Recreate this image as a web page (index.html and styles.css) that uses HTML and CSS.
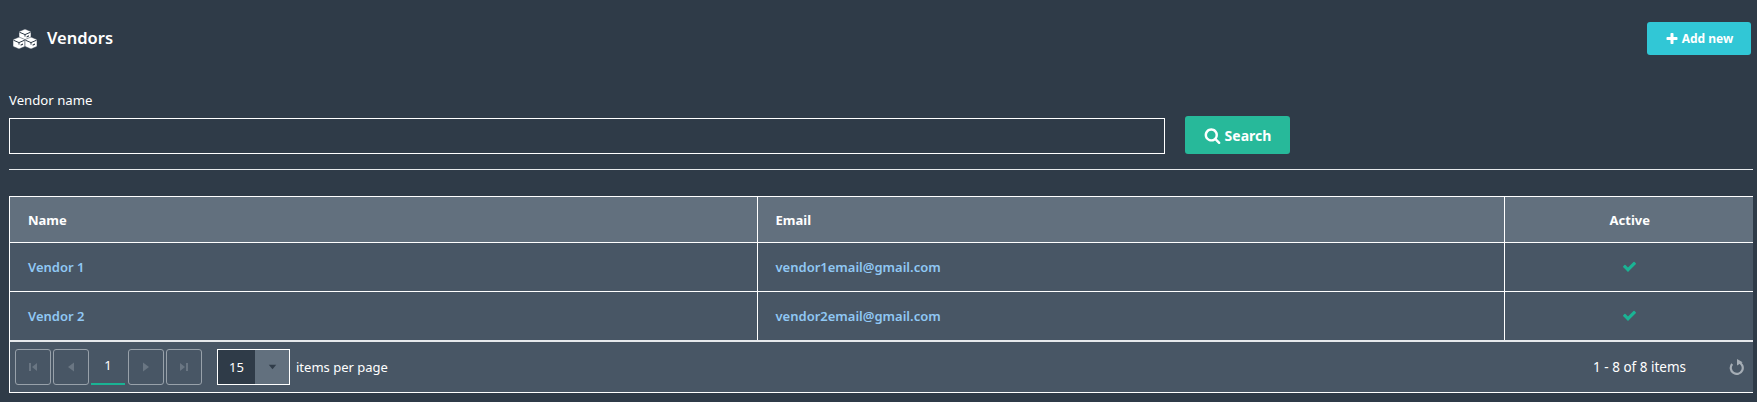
FILE: index.html
```html
<!DOCTYPE html>
<html lang="en">
<head>
<meta charset="utf-8">
<title>Vendors</title>
<link rel="stylesheet" href="styles.css">
</head>
<body>
<header class="topbar">
  <h1 class="title">
    <svg class="title-icon" viewBox="0 0 24 20" aria-hidden="true">
      <g class="cube"><polygon points="12,0 18,2.6 18,9 12,11.6 6,9 6,2.6"/><path d="M6.4 3.2 12 5.6 17.6 3.2M12 5.6V7.6"/><path class="shade" d="M13.6 7.2 16 6.2V7.6L13.6 8.6z"/></g>
      <g class="cube"><polygon points="6,8 12,10.6 12,17.4 6,20 0,17.4 0,10.6"/><path d="M.4 11.2 6 13.6 11.6 11.2M6 13.6V15.6"/><path class="shade" d="M7.6 15.4 10 14.4V15.8L7.6 16.8z"/></g>
      <g class="cube"><polygon points="18,8 24,10.6 24,17.4 18,20 12,17.4 12,10.6"/><path d="M12.4 11.2 18 13.6 23.6 11.2M18 13.6V15.6"/><path class="shade" d="M19.6 15.4 22 14.4V15.8L19.6 16.8z"/></g>
    </svg>
    <span class="title-text">Vendors</span>
  </h1>
  <button class="btn btn-add" type="button">
    <svg class="btn-icon-sm" viewBox="0 0 1792 1792" aria-hidden="true"><path d="M1600 736v192q0 40-28 68t-68 28h-416v416q0 40-28 68t-68 28h-192q-40 0-68-28t-28-68v-416h-416q-40 0-68-28t-28-68v-192q0-40 28-68t68-28h416v-416q0-40 28-68t68-28h192q40 0 68 28t28 68v416h416q40 0 68 28t28 68z"/></svg>
    Add new
  </button>
</header>

<form class="filter">
  <div class="field">
    <label class="field-label" for="vendor-name">Vendor name</label>
    <input class="field-input" id="vendor-name" type="text">
  </div>
  <button class="btn btn-search" type="button">
    <svg class="btn-icon" viewBox="0 0 1792 1792" aria-hidden="true"><path d="M1216 832q0-185-131.5-316.5t-316.5-131.5-316.5 131.5-131.5 316.5 131.5 316.5 316.5 131.5 316.5-131.5 131.5-316.5zm512 832q0 52-38 90t-90 38q-54 0-90-38l-343-342q-179 124-399 124-143 0-273.5-55.5t-225-150-150-225-55.5-273.5 55.5-273.5 150-225 225-150 273.5-55.5 273.5 55.5 225 150 150 225 55.5 273.5q0 220-124 399l343 343q37 37 37 90z"/></svg>
    Search
  </button>
</form>

<hr class="rule">

<section class="grid">
  <table class="grid-table">
    <colgroup><col class="col-name"><col class="col-email"><col></colgroup>
    <thead>
      <tr><th>Name</th><th>Email</th><th class="center">Active</th></tr>
    </thead>
    <tbody>
      <tr>
        <td><a href="#">Vendor 1</a></td>
        <td><a href="#">vendor1email@gmail.com</a></td>
        <td class="center"><svg class="check" viewBox="0 0 1792 1792" aria-hidden="true"><path d="M1671 566q0 40-28 68l-724 724-136 136q-28 28-68 28t-68-28l-136-136-362-362q-28-28-28-68t28-68l136-136q28-28 68-28t68 28l294 295 656-657q28-28 68-28t68 28l136 136q28 28 28 68z"/></svg></td>
      </tr>
      <tr>
        <td><a href="#">Vendor 2</a></td>
        <td><a href="#">vendor2email@gmail.com</a></td>
        <td class="center"><svg class="check" viewBox="0 0 1792 1792" aria-hidden="true"><path d="M1671 566q0 40-28 68l-724 724-136 136q-28 28-68 28t-68-28l-136-136-362-362q-28-28-28-68t28-68l136-136q28-28 68-28t68 28l294 295 656-657q28-28 68-28t68 28l136 136q28 28 28 68z"/></svg></td>
      </tr>
    </tbody>
  </table>
  <div class="pager">
    <div class="pager-nav">
      <span class="pager-btn"><svg viewBox="0 0 16 16" aria-hidden="true"><path d="M4 4h2v8H4zM12 4v8L7 8z"/></svg></span>
      <span class="pager-btn"><svg viewBox="0 0 16 16" aria-hidden="true"><path d="M11 3.5v9L5 8z"/></svg></span>
      <span class="pager-page">1</span>
      <span class="pager-btn"><svg viewBox="0 0 16 16" aria-hidden="true"><path d="M5 3.5v9L11 8z"/></svg></span>
      <span class="pager-btn"><svg viewBox="0 0 16 16" aria-hidden="true"><path d="M10 4h2v8h-2zM4 4v8l5-4z"/></svg></span>
    </div>
    <div class="pager-size">
      <span class="size-value">15</span>
      <span class="size-arrow"><svg viewBox="0 0 12 8" aria-hidden="true"><path d="M1 1h10L6 7z"/></svg></span>
    </div>
    <span class="pager-label">items per page</span>
    <span class="pager-info">1 - 8 of 8 items</span>
    <svg class="pager-refresh" viewBox="0 0 16 16" aria-hidden="true">
      <path class="refresh-arc" d="M9.6 3.2A6 6 0 1 1 3.2 5"/>
      <path class="refresh-head" d="M8 0 13.6 3.2 8 6.6z"/>
    </svg>
  </div>
</section>
</body>
</html>
```

FILE: styles.css
```css
* { box-sizing: border-box; }

html, body { height: 100%; }

body {
  margin: 0;
  padding: 0 4px 0 9px;
  background: #2f3b48;
  color: #fff;
  font-family: "Noto Sans", "Open Sans", sans-serif;
  font-size: 14px;
  overflow: hidden;
}

.topbar {
  display: flex;
  justify-content: space-between;
  align-items: center;
  height: 33px;
  margin-top: 22px;
  padding-right: 2px;
}

.title {
  display: flex;
  align-items: center;
  gap: 10px;
  margin: 0 0 0 4px;
  font-size: 16.5px;
  font-weight: 600;
}

.title-text { margin-top: -2px; }

.title-icon { width: 24px; height: 20px; }
.cube polygon { fill: #fff; stroke: #2f3b48; stroke-width: .5; }
.cube path { fill: none; stroke: #2f3b48; stroke-width: 1; }
.cube .shade { fill: #2f3b48; stroke: none; }

.btn {
  display: inline-flex;
  align-items: center;
  justify-content: center;
  border: 0;
  border-radius: 3px;
  color: #fff;
  font-family: inherit;
  font-weight: 700;
  padding: 0;
}

.btn svg { fill: #fff; }

.btn-add {
  width: 104px;
  height: 33px;
  gap: 3px;
  background: #31c7d6;
  font-size: 12px;
}

.btn-icon-sm { width: 14px; height: 14px; }

.filter {
  display: flex;
  align-items: flex-end;
  gap: 20px;
  margin-top: 36px;
}

.field { display: flex; flex-direction: column; gap: 9px; }

.field-label { font-size: 13.2px; line-height: 18px; }

.field-input {
  display: block;
  width: 1156px;
  height: 36px;
  border: 1px solid #fff;
  background: transparent;
  color: #fff;
  padding: 0 8px;
}

.btn-search {
  width: 105px;
  height: 38px;
  gap: 4px;
  background: #27b99a;
  font-size: 14px;
}

.btn-icon { width: 17px; height: 17px; }

.rule {
  height: 1px;
  margin: 15px 0 26px;
  border: 0;
  background: #e6e9ec;
}

.grid {
  border: solid #fff;
  border-width: 1px 0 1px 1px;
  background: #485665;
}

.grid-table {
  width: 100%;
  table-layout: fixed;
  border-collapse: collapse;
  font-size: 13px;
  font-weight: 600;
}

.col-name { width: 747px; }
.col-email { width: 747px; }

.grid-table th,
.grid-table td {
  padding: 0 0 0 18px;
  text-align: left;
  border-left: 1px solid #fff;
  border-bottom: 1px solid #fff;
}

.grid-table th:first-child,
.grid-table td:first-child { border-left: 0; }

.grid-table th {
  height: 45px;
  padding-top: 2px;
  background: #62707e;
  font-weight: 700;
}

.grid-table td { height: 49px; }
.grid-table tbody tr:last-child td { height: 50px; border-bottom: 2px solid #e6e9ec; }

.grid-table .center { text-align: center; padding-left: 2px; }

.grid-table a { color: #90c8f4; text-decoration: none; }

.check { display: block; width: 15px; height: 15px; margin: 0 auto; fill: #1ab394; }

.pager {
  display: flex;
  align-items: center;
  height: 50px;
  padding: 0 8px 0 5px;
  font-size: 13px;
}

.pager-nav { display: flex; align-items: stretch; gap: 2px; height: 36px; }

.pager-btn {
  display: flex;
  align-items: center;
  justify-content: center;
  width: 36px;
  border: 1px solid #98a1aa;
  border-radius: 3px;
}

.pager-btn svg { width: 16px; height: 16px; fill: #6a7683; }

.pager-page {
  width: 34px;
  margin-right: 1px;
  text-align: center;
  line-height: 32px;
  border-bottom: 2px solid #1ab394;
}

.pager-size {
  display: flex;
  width: 73px;
  height: 36px;
  margin-left: 15px;
  border: 1px solid #fff;
}

.size-value {
  width: 37px;
  background: #2f3b48;
  text-align: center;
  line-height: 34px;
}

.size-arrow {
  flex: 1;
  display: flex;
  align-items: center;
  justify-content: center;
  background: #62707e;
}

.size-arrow svg { width: 9px; height: 6px; fill: #303c49; }

.pager-label { margin-left: 6px; }

.pager-info { margin-left: auto; font-size: 13.5px; }

.pager-refresh { width: 16px; height: 16px; margin-left: 43px; }
.refresh-arc { fill: none; stroke: #a5adb5; stroke-width: 2.2; }
.refresh-head { fill: #a5adb5; }
```
